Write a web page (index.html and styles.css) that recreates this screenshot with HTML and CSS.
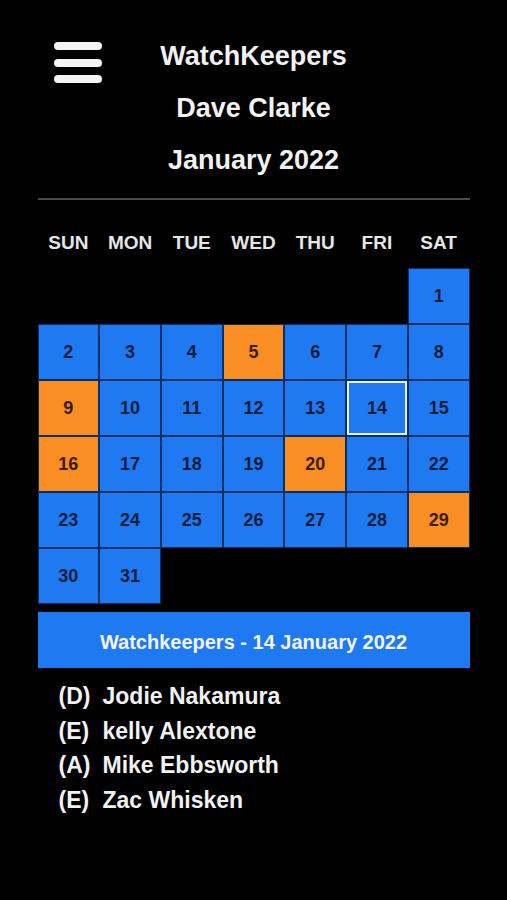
FILE: index.html
```html
<!DOCTYPE html>
<html>
    <head>
        <meta name="viewport" content="width=device-width, initial-scale=1.0">
        <link rel="stylesheet" href="styles.css">
    </head>
    <body>
        <div class="page">

            <div class="top">
                <div class="menu">
                    <span class="bar"></span>
                    <span class="bar"></span>
                    <span class="bar"></span>
                </div>
                <div class="titles">
                    <div class="title">WatchKeepers</div>
                    <div class="title">Dave Clarke</div>
                    <div class="title">January 2022</div>
                </div>
                <div></div>
            </div>

            <hr class="rule">

            <div class="days">
                <div>SUN</div>
                <div>MON</div>
                <div>TUE</div>
                <div>WED</div>
                <div>THU</div>
                <div>FRI</div>
                <div>SAT</div>
            </div>

            <div class="month" id="month"></div>

            <div class="banner">Watchkeepers - 14 January 2022</div>

            <div class="crew">
                <span class="role">(D)</span><span>Jodie Nakamura</span>
                <span class="role">(E)</span><span>kelly Alextone</span>
                <span class="role">(A)</span><span>Mike Ebbsworth</span>
                <span class="role">(E)</span><span>Zac Whisken</span>
            </div>

        </div>

        <script>
            // January 2022 starts on a Saturday
            const month = document.getElementById('month');
            const onDuty = [5, 9, 16, 20, 29];
            const selected = 14;

            for (let i = 0; i < 6; i++) {
                const blank = document.createElement('div');
                blank.className = 'blank';
                month.appendChild(blank);
            }

            for (let d = 1; d <= 31; d++) {
                const cell = document.createElement('div');
                cell.className = 'day';
                if (onDuty.includes(d)) cell.className += ' duty';
                if (d === selected) cell.className += ' picked';
                cell.textContent = d;
                month.appendChild(cell);
            }
        </script>
    </body>
</html>
```

FILE: styles.css
```css
body {
    margin: 0;
    background: #000000;
    font-family: "Liberation Sans", Arial, Helvetica, sans-serif;
}

.page {
    width: 432px;
    margin: 0 auto;
    padding-top: 30px;
}

.top {
    display: grid;
    grid-template-columns: 1fr auto 1fr;
}

.menu {
    display: flex;
    flex-direction: column;
    gap: 8.5px;
    padding: 12px 0 0 16px;
}

.bar {
    display: block;
    width: 48px;
    height: 8px;
    border-radius: 4px;
    background: #f4f4f4;
}

.title {
    color: #f2f2f2;
    font-size: 27px;
    font-weight: bold;
    line-height: 52px;
    text-align: center;
}

.rule {
    margin: 12px 0 0 0;
    border: none;
    height: 2px;
    background: #4a4a4a;
}

.days {
    display: grid;
    grid-template-columns: repeat(7, 1fr);
    margin-top: 23px;
    height: 40px;
    line-height: 40px;
    color: #e6e6e6;
    font-size: 19px;
    font-weight: bold;
    text-align: center;
}

.month {
    display: grid;
    grid-template-columns: repeat(7, 1fr);
    grid-auto-rows: 56px;
    margin-top: 5px;
}

.day {
    display: flex;
    align-items: center;
    justify-content: center;
    background: #1f7af2;
    border: 1px solid #0c2f63;
    color: #0b1c3d;
    font-size: 18px;
    font-weight: bold;
}

.day.duty {
    background: #f98e24;
    color: #3a1c05;
}

.day.picked {
    box-shadow: inset 0 0 0 2px #e9f1ff;
}

.banner {
    margin-top: 8px;
    height: 56px;
    line-height: 61px;
    background: #1f7af2;
    color: #f4f4f4;
    font-size: 20px;
    font-weight: bold;
    text-align: center;
}

.crew {
    display: grid;
    grid-template-columns: 44px auto;
    margin-top: 11px;
    padding-left: 21px;
    color: #f2f2f2;
    font-size: 23px;
    font-weight: bold;
    line-height: 34.5px;
}
```
